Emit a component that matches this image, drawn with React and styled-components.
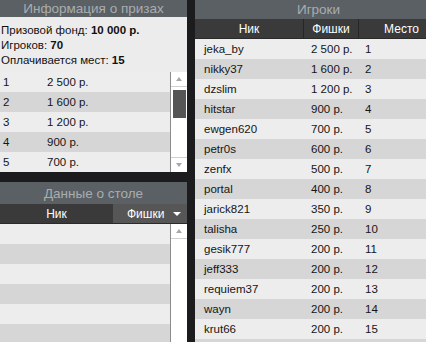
import React from "react";
import styled, { createGlobalStyle } from "styled-components";

const prizes = [
  ["1", "2 500 р."],
  ["2", "1 600 р."],
  ["3", "1 200 р."],
  ["4", "900 р."],
  ["5", "700 р."],
];

const players = [
  ["jeka_by", "2 500 р."],
  ["nikky37", "1 600 р."],
  ["dzslim", "1 200 р."],
  ["hitstar", "900 р."],
  ["ewgen620", "700 р."],
  ["petr0s", "600 р."],
  ["zenfx", "500 р."],
  ["portal", "400 р."],
  ["jarick821", "350 р."],
  ["talisha", "250 р."],
  ["gesik777", "200 р."],
  ["jeff333", "200 р."],
  ["requiem37", "200 р."],
  ["wayn", "200 р."],
  ["krut66", "200 р."],
  ["", ""],
];

const App = () => {
  return (
    <>
      <GlobalStyle />
      <Screen>
        <LeftColumn>
          <Panel $height={172}>
            <PanelTitle $height={17}>Информация о призах</PanelTitle>
            <Info>
              <InfoLine>
                Призовой фонд: <b>10 000 р.</b>
              </InfoLine>
              <InfoLine>
                Игроков: <b>70</b>
              </InfoLine>
              <InfoLine>
                Оплачивается мест: <b>15</b>
              </InfoLine>
            </Info>
            <TableArea>
              <Rows>
                {prizes.map(([place, sum], i) => (
                  <PrizeRow key={place} $odd={i % 2 === 1}>
                    <span>{place}</span>
                    <span>{sum}</span>
                  </PrizeRow>
                ))}
              </Rows>
              <Scrollbar>
                <ScrollButton>
                  <Arrow $up />
                </ScrollButton>
                <Track>
                  <Thumb />
                </Track>
                <ScrollButton $bottom>
                  <Arrow />
                </ScrollButton>
              </Scrollbar>
            </TableArea>
          </Panel>

          <Panel $height={160}>
            <PanelTitle $height={22}>Данные о столе</PanelTitle>
            <TableHead $cols="113px 1fr">
              <HeadCell>Ник</HeadCell>
              <HeadCell $sorted>
                Фишки
                <SortArrow />
              </HeadCell>
            </TableHead>
            <TableArea>
              <Rows>
                {[0, 1, 2, 3, 4, 5].map((i) => (
                  <EmptyRow key={i} $odd={i % 2 === 1} />
                ))}
              </Rows>
              <Scrollbar>
                <ScrollButton>
                  <Arrow $up />
                </ScrollButton>
              </Scrollbar>
            </TableArea>
          </Panel>
        </LeftColumn>

        <Panel $height={342} $grow>
          <PanelTitle $height={19} $shift={16}>
            Игроки
          </PanelTitle>
          <TableHead $cols="109px 55px 1fr">
            <HeadCell $line>Ник</HeadCell>
            <HeadCell $line>Фишки</HeadCell>
            <HeadCell $shift={18}>Место</HeadCell>
          </TableHead>
          <Rows>
            {players.map(([nick, chips], i) => (
              <PlayerRow key={i} $odd={i % 2 === 1}>
                <span>{nick}</span>
                <span>{chips}</span>
                <span>{nick ? i + 1 : ""}</span>
              </PlayerRow>
            ))}
          </Rows>
        </Panel>
      </Screen>
    </>
  );
};

export default App;

const GlobalStyle = createGlobalStyle`
  html, body {
    margin: 0;
    padding: 0;
    background: #1c1c1f;
    font-family: "Liberation Sans", Arial, sans-serif;
  }
`;

const Screen = styled.div`
  display: flex;
  gap: 8px;
  width: 426px;
  height: 342px;
  overflow: hidden;
  background: #1c1c1f;
`;

const LeftColumn = styled.div`
  display: flex;
  flex-direction: column;
  gap: 10px;
  width: 187px;
  flex-shrink: 0;
`;

const Panel = styled.div`
  display: flex;
  flex-direction: column;
  flex: ${(p) => (p.$grow ? "1" : "none")};
  height: ${(p) => p.$height}px;
  background: #ececec;
  overflow: hidden;
`;

const PanelTitle = styled.div`
  display: flex;
  align-items: center;
  justify-content: center;
  height: ${(p) => p.$height}px;
  flex-shrink: 0;
  padding-left: ${(p) => p.$shift || 0}px;
  background: #5b6064;
  color: #a9adb0;
  font-size: 13.5px;
`;

const Info = styled.div`
  padding: 6px 0 4px 0;
  color: #111;
  font-size: 11.5px;
`;

const InfoLine = styled.div`
  height: 15px;
  line-height: 15px;
  padding-left: 1px;

  b {
    font-weight: bold;
  }
`;

const TableArea = styled.div`
  display: flex;
  flex: 1;
  min-height: 0;
`;

const Rows = styled.div`
  display: flex;
  flex-direction: column;
  flex: 1;
`;

const Row = styled.div`
  display: grid;
  align-items: center;
  height: 20px;
  flex-shrink: 0;
  background: ${(p) => (p.$odd ? "#d6d6d6" : "#ededed")};
  color: #151515;
  font-size: 11.5px;
`;

const PrizeRow = styled(Row)`
  grid-template-columns: 47px 1fr;

  span:first-child {
    padding-left: 3px;
  }
`;

const EmptyRow = styled(Row)``;

const PlayerRow = styled(Row)`
  grid-template-columns: 109px 55px 1fr;

  span:nth-child(1) {
    padding-left: 9px;
  }
  span:nth-child(2) {
    padding-left: 7px;
  }
  span:nth-child(3) {
    padding-left: 6px;
  }
`;

const Scrollbar = styled.div`
  display: flex;
  flex-direction: column;
  width: 16px;
  flex-shrink: 0;
  background: #ffffff;
  border-left: 1px solid #8c8c8c;
`;

const ScrollButton = styled.div`
  display: flex;
  align-items: center;
  justify-content: center;
  height: 14px;
  flex-shrink: 0;
  border-top: ${(p) => (p.$bottom ? "1px solid #d0d0d0" : "none")};
  border-bottom: ${(p) => (p.$bottom ? "none" : "1px solid #d0d0d0")};
`;

const Arrow = styled.div`
  width: 0;
  height: 0;
  border-left: 3px solid transparent;
  border-right: 3px solid transparent;
  ${(p) =>
    p.$up
      ? "border-bottom: 4px solid #a8a8a8;"
      : "border-top: 4px solid #a8a8a8;"}
`;

const Track = styled.div`
  flex: 1;
  padding-top: 3px;
  display: flex;
  justify-content: center;
`;

const Thumb = styled.div`
  width: 13px;
  height: 28px;
  background: #555555;
`;

const TableHead = styled.div`
  display: grid;
  grid-template-columns: ${(p) => p.$cols};
  height: 20px;
  flex-shrink: 0;
  background: #3a3a3a;
  border-bottom: 1px solid #2a2a2a;
  box-sizing: border-box;
`;

const HeadCell = styled.div`
  display: flex;
  align-items: center;
  justify-content: center;
  position: relative;
  padding-left: ${(p) => p.$shift || 0}px;
  background: ${(p) => (p.$sorted ? "#565656" : "transparent")};
  border-right: ${(p) => (p.$line ? "1px solid #262626" : "none")};
  color: #ffffff;
  font-size: 12px;
  ${(p) => p.$sorted && "justify-content: flex-start; padding-left: 14px;"}
`;

const SortArrow = styled.span`
  position: absolute;
  right: 6px;
  top: 8px;
  width: 0;
  height: 0;
  border-left: 4px solid transparent;
  border-right: 4px solid transparent;
  border-top: 4px solid #ffffff;
`;
